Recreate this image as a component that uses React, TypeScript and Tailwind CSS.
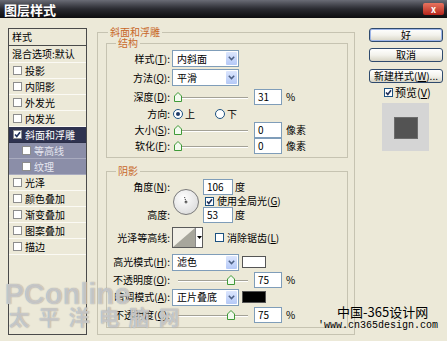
import React from "react";

const U = ({ c }: { c: string }) => <span className="underline">{c}</span>;

const Box = ({ checked = false, light = false }: { checked?: boolean; light?: boolean }) => (
  <span
    className={`flex h-[9px] w-[9px] shrink-0 items-center justify-center border ${
      light ? "border-[#8d8d8d]" : "border-[#1c5180]"
    } bg-white`}
  >
    {checked && (
      <svg width="7" height="7" viewBox="0 0 7 7">
        <path d="M1 3.5 L2.8 5.4 L6 1.2" fill="none" stroke="#21315a" strokeWidth="1.6" />
      </svg>
    )}
  </span>
);

const Radio = ({ on = false }: { on?: boolean }) => (
  <svg width="10" height="10" viewBox="0 0 10 10" className="block shrink-0">
    <circle cx="5" cy="5" r="4.5" fill="#fff" stroke="#1c5180" />
    {on && <circle cx="5" cy="5" r="2" fill="#203c68" />}
  </svg>
);

const Select = ({ value }: { value: string }) => (
  <div className="flex h-[17px] w-[67px] shrink-0 border border-[#7f9db9] bg-white">
    <span className="flex flex-1 items-center pl-[4px]">{value}</span>
    <span className="m-[1px] flex w-[11px] items-center justify-center rounded-[1px] bg-linear-to-b from-[#dce6fd] to-[#b5c9f7]">
      <svg width="7" height="5" viewBox="0 0 7 5">
        <path d="M0.8 0.8 L3.5 3.6 L6.2 0.8" fill="none" stroke="#4d6185" strokeWidth="1.5" />
      </svg>
    </span>
  </div>
);

const Field = ({ value, w = "w-[28px]" }: { value: string; w?: string }) => (
  <div className={`flex h-[16px] ${w} shrink-0 items-center border border-[#7f9db9] bg-white pl-[3px]`}>{value}</div>
);

const Slider = ({ pos }: { pos: number }) => (
  <svg width="80" height="12" viewBox="0 0 80 12" className="block shrink-0">
    <line x1="6" y1="6.5" x2="76" y2="6.5" stroke="#a3a196" />
    <line x1="6" y1="7.5" x2="76" y2="7.5" stroke="#ffffff" />
    <path
      d={`M${pos - 3.5} 10.5 L${pos - 3.5} 5 L${pos} 1.5 L${pos + 3.5} 5 L${pos + 3.5} 10.5 Z`}
      fill="#f3faef"
      stroke="#3f9a38"
    />
  </svg>
);

const Label = ({ children }: { children: React.ReactNode }) => (
  <span className="w-[63px] shrink-0 text-right">{children}</span>
);

const Btn = ({ children, primary = false, className = "" }: { children: React.ReactNode; primary?: boolean; className?: string }) => (
  <div
    className={`flex h-[14px] w-[74px] items-center justify-center rounded-[3px] border border-[#2f4a6d] bg-linear-to-b from-[#ffffff] via-[#f3f2ec] to-[#d8d5c6] ${
      primary ? "shadow-[inset_0_0_0_1px_#9db5e8]" : ""
    } ${className}`}
  >
    {children}
  </div>
);

const items: { t: string; active?: boolean; sub?: boolean }[] = [
  { t: "投影" },
  { t: "内阴影" },
  { t: "外发光" },
  { t: "内发光" },
  { t: "斜面和浮雕", active: true },
  { t: "等高线", sub: true },
  { t: "纹理", sub: true },
  { t: "光泽" },
  { t: "颜色叠加" },
  { t: "渐变叠加" },
  { t: "图案叠加" },
  { t: "描边" },
];

const LeftPanel = () => (
  <div className="mt-[2px] flex h-[307px] w-[79px] shrink-0 flex-col border border-[#4a4a4a]">
    <div className="flex h-[17px] shrink-0 items-center border-b border-[#4a4a4a] pl-[3px]">样式</div>
    <div className="flex h-[17px] shrink-0 items-center border-b border-[#fbfaf4] pl-[3px]">混合选项:默认</div>
    {items.map((it) => (
      <div
        key={it.t}
        className={`flex h-[16px] shrink-0 items-center gap-[3px] border-b ${
          it.active
            ? "border-[#2b2f48] bg-[#2f3350] pl-[4px] text-white"
            : it.sub
            ? "border-[#a9abbf] bg-[#8b8ea8] pl-[13px] text-[#e6e7f0]"
            : "border-[#fbfaf4] pl-[4px]"
        }`}
      >
        <Box checked={it.active} light />
        <span>{it.t}</span>
      </div>
    ))}
  </div>
);

const AngleDial = () => (
  <svg width="28" height="28" viewBox="0 0 28 28" className="block">
    <defs>
      <radialGradient id="dial" cx="40%" cy="35%" r="70%">
        <stop offset="0%" stopColor="#ffffff" />
        <stop offset="100%" stopColor="#dcdcdc" />
      </radialGradient>
    </defs>
    <circle cx="14" cy="14" r="12.5" fill="url(#dial)" stroke="#7a7a7a" />
    <line x1="14" y1="14" x2="12.6" y2="9.2" stroke="#222" strokeDasharray="1 1" />
    <line x1="12.5" y1="14" x2="15.5" y2="14" stroke="#444" />
    <line x1="14" y1="12.5" x2="14" y2="15.5" stroke="#444" />
  </svg>
);

const Contour = () => (
  <div className="flex h-[21px] w-[31px] shrink-0 border border-[#5a5a5a] bg-white">
    <svg width="22" height="19" viewBox="0 0 22 19" className="block">
      <rect width="22" height="19" fill="#f1efe6" />
      <polygon points="0,19 22,0 22,19" fill="#a7a69c" />
    </svg>
    <span className="flex flex-1 items-center justify-center border-l border-[#8a8a8a]">
      <svg width="5" height="3" viewBox="0 0 5 3">
        <polygon points="0,0 5,0 2.5,3" fill="#000" />
      </svg>
    </span>
  </div>
);

const RightCol = () => (
  <div className="ml-[14px] mt-[2px] flex w-[74px] shrink-0 flex-col">
    <Btn primary>好</Btn>
    <Btn className="mt-[6px]">取消</Btn>
    <Btn className="mt-[7px]">
      新建样式(<U c="W" />)...
    </Btn>
    <div className="mt-[3px] flex h-[12px] items-center gap-[2px] pl-[15px] text-[11px]">
      <Box checked />
      <span>
        预览(<U c="V" />)
      </span>
    </div>
    <div className="ml-[13px] mt-[5px] flex h-[48px] w-[47px] items-center justify-center bg-[#d5d5d5]">
      <div className="ml-[1px] mt-[2px] h-[22px] w-[24px] border border-[#6c6c6c] bg-[#535353]" />
    </div>
  </div>
);

export default function App() {
  return (
    <div className="relative h-[341px] w-[447px] overflow-hidden bg-[#ece9d8] font-['Noto_Sans_CJK_SC','Noto_Sans',sans-serif] text-[10px] leading-none text-black">
      <div className="flex h-[18px] items-center justify-between bg-linear-to-b from-[#6a6c76] via-[#2a2b31] to-[#0d0d0f] pl-[4px] pr-[3px]">
        <span className="text-[13px] font-bold text-white">图层样式</span>
        <span className="flex h-[12px] w-[21px] items-center justify-center rounded-[2px] bg-linear-to-b from-[#e8735f] to-[#b5221a] text-[9px] font-bold text-white">
          x
        </span>
      </div>

      <div className="flex items-start pl-[8px] pt-[8px]">
        <LeftPanel />

        <fieldset className="ml-[10px] h-[309px] w-[258px] shrink-0 border border-[#c6c3b1]">
          <legend className="ml-[10px] px-[2px] text-[10px] leading-[12px] text-[#c8682a]">斜面和浮雕</legend>

          <fieldset className="-mt-[1px] ml-[8px] h-[121px] w-[242px] border border-[#c6c3b1]">
            <legend className="ml-[9px] px-[2px] text-[10px] leading-[12px] text-[#c8682a]">结构</legend>
            <div className="flex h-[19px] items-center gap-[2px]">
              <Label>
                样式(<U c="T" />):
              </Label>
              <Select value="内斜面" />
            </div>
            <div className="flex h-[19px] items-center gap-[2px]">
              <Label>
                方法(<U c="Q" />):
              </Label>
              <Select value="平滑" />
            </div>
            <div className="flex h-[19px] items-center gap-[2px]">
              <Label>
                深度(<U c="D" />):
              </Label>
              <Slider pos={6} />
              <Field value="31" />
              <span className="ml-[2px]">%</span>
            </div>
            <div className="flex h-[16px] items-center gap-[2px]">
              <Label>方向:</Label>
              <span className="ml-[1px] flex items-center gap-[2px]">
                <Radio on />上
              </span>
              <span className="ml-[18px] flex items-center gap-[2px]">
                <Radio />下
              </span>
            </div>
            <div className="flex h-[16px] items-center gap-[2px]">
              <Label>
                大小(<U c="S" />):
              </Label>
              <Slider pos={6} />
              <Field value="0" />
              <span className="ml-[2px]">像素</span>
            </div>
            <div className="flex h-[16px] items-center gap-[2px]">
              <Label>
                软化(<U c="F" />):
              </Label>
              <Slider pos={6} />
              <Field value="0" />
              <span className="ml-[2px]">像素</span>
            </div>
          </fieldset>

          <fieldset className="ml-[8px] mt-[7px] h-[163px] w-[242px] border border-[#c6c3b1]">
            <legend className="ml-[9px] px-[2px] text-[10px] leading-[12px] text-[#c8682a]">阴影</legend>

            <div className="flex h-[48px]">
              <div className="flex w-[63px] shrink-0 flex-col justify-between text-right">
                <span className="leading-[20px]">
                  角度(<U c="N" />):
                </span>
                <span className="leading-[20px]">高度:</span>
              </div>
              <div className="ml-[2px] mt-[11px]">
                <AngleDial />
              </div>
              <div className="ml-[3px] flex flex-col">
                <div className="mt-[2px] flex items-center gap-[2px]">
                  <Field value="106" w="w-[30px]" />
                  <span>度</span>
                </div>
                <div className="flex h-[12px] items-center gap-[3px] pl-[2px]">
                  <Box checked />
                  <span>
                    使用全局光(<U c="G" />)
                  </span>
                </div>
                <div className="flex items-center gap-[2px]">
                  <Field value="53" w="w-[30px]" />
                  <span>度</span>
                </div>
              </div>
            </div>

            <div className="flex h-[25px] items-center gap-[2px]">
              <Label>光泽等高线:</Label>
              <Contour />
              <span className="ml-[10px] flex items-center gap-[3px]">
                <Box />
                <span>
                  消除锯齿(<U c="L" />)
                </span>
              </span>
            </div>

            <div className="mt-[3px] flex h-[18px] items-center gap-[2px]">
              <Label>
                高光模式(<U c="H" />):
              </Label>
              <Select value="滤色" />
              <span className="ml-[1px] h-[12px] w-[24px] border border-[#555] bg-white" />
            </div>
            <div className="flex h-[17px] items-center gap-[2px]">
              <Label>
                不透明度(<U c="O" />):
              </Label>
              <Slider pos={59} />
              <Field value="75" />
              <span className="ml-[2px]">%</span>
            </div>
            <div className="flex h-[18px] items-center gap-[2px]">
              <Label>
                暗调模式(<U c="A" />):
              </Label>
              <Select value="正片叠底" />
              <span className="ml-[1px] h-[12px] w-[24px] border border-[#555] bg-black" />
            </div>
            <div className="flex h-[18px] items-center gap-[2px]">
              <Label>
                不透明度(<U c="C" />):
              </Label>
              <Slider pos={59} />
              <Field value="75" />
              <span className="ml-[2px]">%</span>
            </div>
          </fieldset>
        </fieldset>

        <RightCol />
      </div>

      <div className="pointer-events-none absolute left-[5px] top-[280px] font-['Liberation_Sans',sans-serif] text-[29px] font-bold leading-none text-white/55 [text-shadow:0_0_1px_#7a7a7a]">
        PConline
      </div>
      <div className="pointer-events-none absolute left-[9px] top-[306px] text-[21px] font-bold leading-none tracking-[9px] text-white/55 [text-shadow:0_0_1px_#7a7a7a]">
        太平洋电脑网
      </div>
      <div className="pointer-events-none absolute left-[337px] top-[305px] text-[13px] leading-none text-black">
        中国-365设计网
      </div>
      <div className="pointer-events-none absolute left-[318px] top-[321px] font-['Liberation_Mono',monospace] text-[10px] leading-none text-black">
        'www.cn365design.com
      </div>
    </div>
  );
}
